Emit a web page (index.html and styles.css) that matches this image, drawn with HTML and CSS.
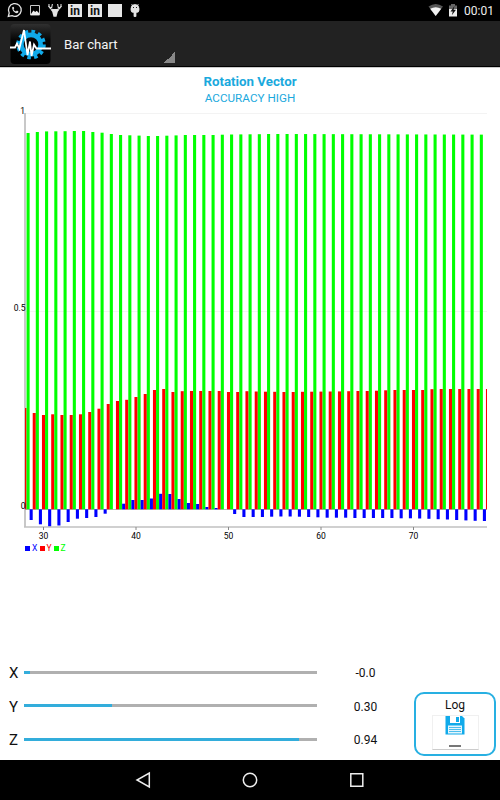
FILE: index.html
```html
<!DOCTYPE html>
<html lang="en">
<head>
<meta charset="utf-8">
<title>Bar chart</title>
<link rel="stylesheet" href="styles.css">
</head>
<body>
<header class="status">
  <svg class="status-icons" width="150" height="21" viewBox="0 0 150 21">
    <path d="M8.3 16.500 9.200 13A6.400 6.400 0 1 1 12 15.700Z" fill="none" stroke="#e4e4e4" stroke-width="1.300"/>
    <path d="M12.200 7.300c1-1.300 1.800-.3 2 1l-.7 1c.5 1.200 1.300 1.800 2.400 2.200l1-.9c1.600.6 1.800 1 1.200 1.900-1.500 2-6.200-1-5.900-5.200Z" fill="#e4e4e4"/>
    <path d="M30.500 5.500h9v9.500h-9Z" fill="none" stroke="#c8c8c8" stroke-width="1"/>
    <path d="m31 14 2.400-3.500 1.800 1.500 1.500-1.200L39 13v2h-8Z" fill="#eee"/>
    <path d="M49 4c-.5 3 1.600 5 4 5.500M61 4c.5 3-1.600 5-4 5.500M52.400 4l-.8 4M57.600 4l.8 4M48.300 6.200l3 2M61.700 6.200l-3 2" fill="none" stroke="#e4e4e4" stroke-width="1.100"/>
    <path d="m50.500 9.500 2.800-.5h3.400l2.800.5-1.700 2.300-1.300 5h-3l-1.300-5Z" fill="#e4e4e4"/>
    <path d="M68 4h14v13H68ZM88 4h14v13H88ZM108 4h14v13h-14Z" fill="#e6e6e6"/>
    <path d="M131 8.500a4 4 0 0 1 8 0V10q0 2.500-2.500 2.500H136v4h-2v-4h-.5q-2.500 0-2.500-2.500ZM131.500 4l1.500 2M138.500 4l-1.500 2" fill="#e4e4e4" stroke="#e4e4e4" stroke-width=".8"/>
    <path d="M133 7.500h1M136 7.500h1" stroke="#222"/>
    <text class="badge-text" x="75" y="15.200">in</text>
    <text class="badge-text" x="95" y="15.200">in</text>
  </svg>
  <div class="status-right">
    <svg width="30" height="21" viewBox="429 0 30 21">
      <path d="M429.500 6.500q7.300-5 14.500 0L436.700 16Z" fill="#555"/>
      <path d="M431.200 8.800q5.500-3 11 0L436.700 16Z" fill="#f2f2f2"/>
      <path d="M450 5.500h2V4h4v1.500h2V9h-8Z" fill="#666"/>
      <path d="M450 9h8v7.500h-8Z" fill="#eee"/>
      <path d="m455.500 6-4 5.500h2.300l-1 3.800 4.200-5.600h-2.400Z" fill="#111"/>
    </svg>
    <span>00:01</span>
  </div>
</header>
<div class="action">
  <svg class="app-icon" width="42" height="42" viewBox="0 0 42 42">
    <defs><linearGradient id="ib" x1="0" y1="0" x2="0" y2="1"><stop offset="0" stop-color="#303030"/><stop offset=".4" stop-color="#050505"/><stop offset="1" stop-color="#000"/></linearGradient></defs>
    <rect x=".5" y="1" width="40" height="40" rx="4" fill="url(#ib)"/>
    <circle cx="21" cy="21.500" r="9.600" fill="none" stroke="#10aaea" stroke-width="4.600"/>
    <circle cx="21" cy="21.500" r="12.800" fill="none" stroke="#10aaea" stroke-width="4" stroke-dasharray="3.500 3.203"/>
    <path d="M0 24.500h5l2-4 2.300 5L14 7l3.500 25L20 18.500l1.500 14.500L24 21.500l2.500 4H41" fill="none" stroke="#fff" stroke-width="1.800"/>
  </svg>
  <div class="spinner"><span>Bar chart</span></div>
</div>
<main>
  <div class="heading"><h1>Rotation Vector</h1><p>ACCURACY HIGH</p></div>
  <svg class="chart" id="chart" width="500" height="455" viewBox="0 105 500 455">
    <clipPath id="plot"><path d="M25 110h462v417H25Z"/></clipPath>
    <path d="M25 113.500h462M25 311.500h462" stroke="#f3f3f3"/>
    <path d="M25 113v414" stroke="#c8c8c8" stroke-width="2"/>
    <path d="M25 509.500h462" stroke="#bbb"/>
    <g id="bars" clip-path="url(#plot)"></g>
    <path d="M24 527h463" stroke="#c0c0c0" stroke-width="1.600"/>
    <g id="ticks"></g>
    <g class="ylabels"><text x="25" y="114">1</text><text x="25.500" y="311">0.5</text><text x="25.500" y="509">0</text></g>
    <g class="legend">
      <path d="M25 546h5v5h-5Z" fill="#00f"/><text x="32" y="551" fill="#00f">X</text>
      <path d="M40 546h5v5h-5Z" fill="#f00"/><text x="46.500" y="551" fill="#f00">Y</text>
      <path d="M54 546h5v5h-5Z" fill="#0f0"/><text x="60.500" y="551" fill="#0f0">Z</text>
    </g>
  </svg>
  <div class="bottom">
    <div class="rows">
      <div class="row"><b>X</b><div class="track"><i style="width:2%"></i></div><span>-0.0</span></div>
      <div class="row"><b>Y</b><div class="track"><i style="width:30%"></i></div><span>0.30</span></div>
      <div class="row"><b>Z</b><div class="track"><i style="width:94%"></i></div><span>0.94</span></div>
    </div>
    <div class="log">
      <span>Log</span>
      <div class="toggle">
        <svg width="20" height="20" viewBox="0 0 20 20">
          <path d="M.500 1H17l2.500 2.500v16H.500Z" fill="#10aaea"/>
          <path d="M5 1h10v7H5Z" fill="#fff"/>
          <path d="M11 2h3v5h-3Z" fill="#10aaea"/>
          <path d="M3 10.500h14v8H3Z" fill="#e4f5fc"/>
          <path d="M4 12.500h12M4 14.500h12M4 16.500h12" stroke="#4cbdec"/>
        </svg>
        <div class="dash"></div>
      </div>
    </div>
  </div>
</main>
<nav>
  <svg width="500" height="40" viewBox="0 0 500 40" fill="none" stroke="#eee" stroke-width="1.500">
    <path d="M149.300 13v14L137 20Z"/><circle cx="250" cy="20" r="6.700"/><path d="M350.800 13.700h12v12.500h-12Z"/>
  </svg>
</nav>
<script src="chart.js"></script>
</body>
</html>
```
FILE: styles.css
```css
* { box-sizing: border-box; }
body { margin: 0; width: 500px; height: 800px; display: flex; flex-direction: column; background: #fff; color: #111; font-family: Roboto, "Liberation Sans", sans-serif; overflow: hidden; }
.status { height: 21px; background: #000; display: flex; justify-content: space-between; }
.status svg { display: block; }
.status-right { display: flex; gap: 5px; padding-right: 7px; color: #eee; font-size: 12px; line-height: 22px; }
.status-right span { width: 29px; }
.badge-text { font: bold 12px Roboto, sans-serif; text-anchor: middle; fill: #111; }
.status-right svg { margin-right: 1px; }
.action { height: 46px; background: #222; border-bottom: 1px solid #000; display: flex; padding-left: 10px; }
.app-icon { margin-top: 2px; }
.spinner { width: 123px; padding-left: 12px; line-height: 47px; font-size: 13.200px; color: #f4f4f4; background: linear-gradient(135deg, transparent 50%, #888 50%) 100% 31px / 11px 11px no-repeat; }
main { height: 693px; border-top: 1px solid #ccc; display: flex; flex-direction: column; }
.heading { height: 37px; text-align: center; color: #1aa9dd; padding-top: 5px; }
h1, p { margin: 0; }
h1 { font-size: 13.300px; line-height: 17px; font-weight: 700; }
p { font-size: 11.700px; line-height: 16px; }
.chart { display: block; flex: none; font-size: 8.500px; }
.ylabels { text-anchor: end; }
.tick { text-anchor: middle; }
.legend { font-size: 8.500px; }
.bottom { flex: 1; display: flex; justify-content: space-between; padding: 96px 4px 0 9px; }
.row { display: flex; align-items: center; height: 33.500px; }
.row b { width: 15px; font-weight: 400; font-size: 15px; padding-top: 1px; }
.track { width: 293px; height: 3px; background: #b0b0b0; margin-bottom: 1px; }
.track i { display: block; height: 3px; background: #33addb; }
.row span { width: 97px; text-align: center; font-size: 12px; padding-top: 1px; }
.log { width: 82px; height: 64px; margin-top: 36px; border: 2px solid #28b0e2; border-radius: 10px; display: flex; flex-direction: column; align-items: center; font-size: 12px; line-height: 14px; padding-top: 4px; }
.toggle { width: 47px; height: 35px; margin-top: 3px; border: 1px solid #f0f0f0; border-bottom-color: #ccc; display: flex; flex-direction: column; align-items: center; justify-content: space-between; padding-bottom: 2px; }
.toggle svg { display: block; margin-top: -1px; }
.dash { width: 12px; height: 2px; background: #777; }
nav { height: 40px; background: #000; }
nav svg { display: block; }
```
FILE: chart.js
```js
const first = 28, zero = 509.3, step = 9.25;
const x = [509,520,524.3,526.7,525.5,522,518.7,518,517,513.7,509.3,503.7,500,500,498.5,493.8,494,499,503,504,507,508,509.3,514,517,517,517,516.7,516.5,516.5,516.7,517,517.3,517.7,517.7,517.7,518,518,518,518,518,518.3,518.3,518.5,518.8,519.2,519.5,520,520.4,520.8,521];
const y = [408,413,415,414.3,415,415,414.3,412,408.7,404,401,399.8,397,394,390,389,392,391.2,391,391,391,391,392,392,391.2,391.5,391.7,391.8,392,392,391.8,391.7,391.6,391.5,391.4,391.2,391,391,390.7,390.3,390,390,390,390,389.2,389,389,389,389,389,389];
const z = [133,132,131.4,131.3,131.2,131,131,132,132.7,134,135,135.3,135.6,136,136,135.7,135.4,135,135,135,135,134.7,134.5,134.4,134.3,134.2,134,134,134];
const svg = (parent, name, attrs) => {
  const e = document.createElementNS("http://www.w3.org/2000/svg", name);
  for (const k in attrs) e.setAttribute(k, attrs[k]);
  parent.appendChild(e);
  return e;
};
const bars = document.getElementById("bars");
y.forEach((top, i) => {
  const c = 25 + i * step;
  [[x[i], "#00f"], [top, "#f00"], [z[i] || 134 + (i - 28) * .03, "#0f0"]].forEach(([v, fill], s) => {
    svg(bars, "rect", { x: c + (s - 1.5) * step / 3, y: Math.min(v, zero), width: step / 3, height: Math.abs(v - zero), fill });
  });
});
const ticks = document.getElementById("ticks");
for (let n = 30; n <= 70; n += 10) {
  const c = 25 + (n - first) * step;
  svg(ticks, "path", { d: `M${c} 527v3`, stroke: "#888" });
  svg(ticks, "text", { x: c, y: 538.5, class: "tick" }).textContent = n;
}
```
